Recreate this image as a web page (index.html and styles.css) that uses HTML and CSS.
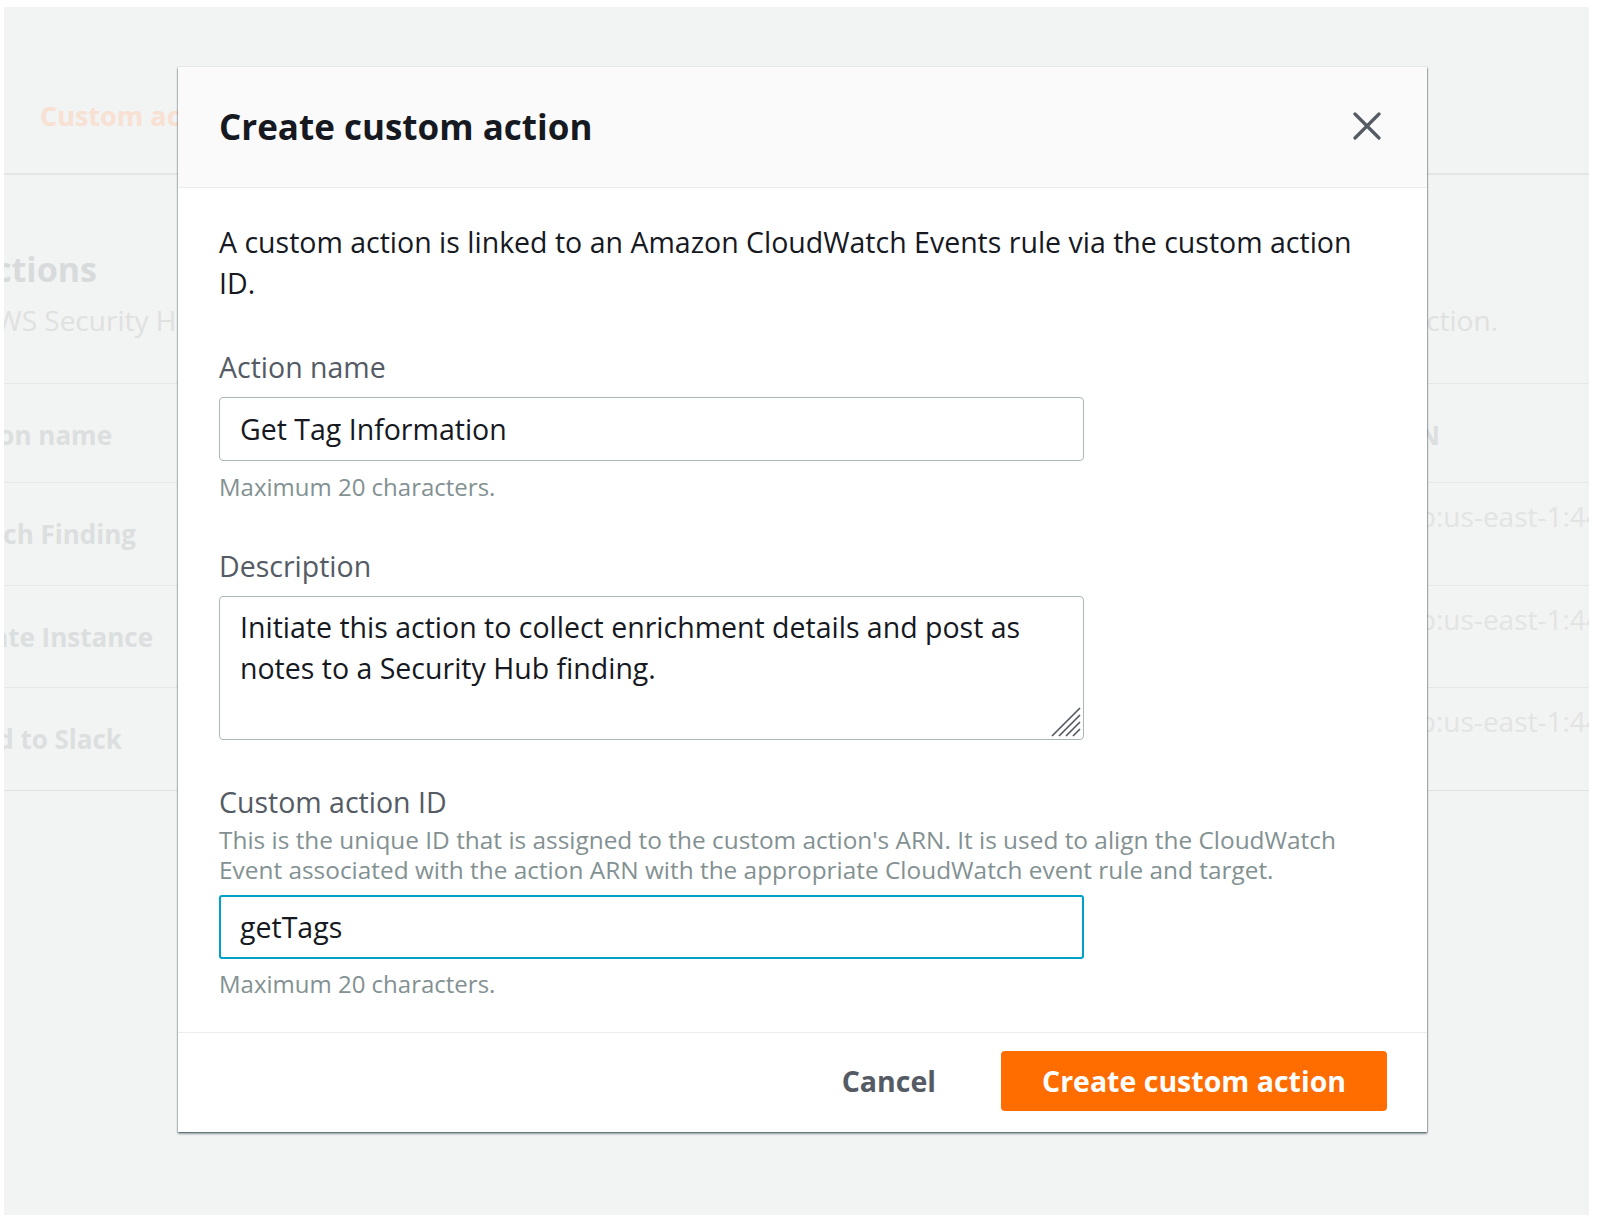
FILE: index.html
```html
<!DOCTYPE html>
<html lang="en">
<head>
<meta charset="utf-8">
<title>Create custom action</title>
<link rel="stylesheet" href="styles.css">
</head>
<body>
<div class="screen">
  <div class="page">
    <div class="tabs"><span class="tab">Custom actions</span></div>

    <div class="bg-row row-heading">
      <div class="bg-left"><div class="pre w-heading"><span class="bg-h">Custom actions</span></div></div>
    </div>

    <div class="bg-row row-desc">
      <div class="bg-left">
        <div class="pre w-aws"><span>Create custom actions to send findings in AWS</span></div><span>&nbsp;Security Hub to Amazon CloudWatch Events</span>
      </div>
      <div class="bg-gap"></div>
      <div class="bg-right"><div class="pre w-action"><span>findings to a custom action.</span></div></div>
    </div>

    <div class="table">
      <div class="bg-row thead">
        <div class="bg-left"><div class="pre w-name"><span>Action name</span></div></div>
        <div class="bg-gap"></div>
        <div class="bg-right"><div class="pre w-arn-h"><span>ARN</span></div></div>
      </div>
      <div class="bg-row trow">
        <div class="bg-left"><div class="pre w-r1"><span>Enrich Finding</span></div></div>
        <div class="bg-gap"></div>
        <div class="bg-right arn"><div class="pre w-arn"><span>arn:aws:securityhub</span></div><span>:us-east-1:444455556666:action/custom/getTags</span></div>
      </div>
      <div class="bg-row trow">
        <div class="bg-left"><div class="pre w-r2"><span>Terminate Instance</span></div></div>
        <div class="bg-gap"></div>
        <div class="bg-right arn"><div class="pre w-arn"><span>arn:aws:securityhub</span></div><span>:us-east-1:444455556666:action/custom/terminate</span></div>
      </div>
      <div class="bg-row trow">
        <div class="bg-left"><div class="pre w-r3"><span>Send to Slack</span></div></div>
        <div class="bg-gap"></div>
        <div class="bg-right arn"><div class="pre w-arn"><span>arn:aws:securityhub</span></div><span>:us-east-1:444455556666:action/custom/slack</span></div>
      </div>
    </div>
  </div>

  <div class="modal" role="dialog" aria-labelledby="modal-title">
    <div class="modal-head">
      <h2 id="modal-title" class="modal-title">Create custom action</h2>
      <button class="close" type="button" aria-label="Close">
        <svg width="28" height="28" viewBox="0 0 28 28" aria-hidden="true"><path d="M2 2 L26 26 M26 2 L2 26" stroke="#545b64" stroke-width="3.2" stroke-linecap="round" fill="none"/></svg>
      </button>
    </div>

    <div class="modal-body">
      <p class="intro">A custom action is linked to an Amazon CloudWatch Events rule via the custom action ID.</p>

      <div class="field">
        <label class="label" for="f-name">Action name</label>
        <input id="f-name" class="input" type="text" value="Get Tag Information">
        <div class="hint">Maximum 20 characters.</div>
      </div>

      <div class="field field-desc">
        <label class="label" for="f-desc">Description</label>
        <div class="textwrap">
          <textarea id="f-desc" class="textarea">Initiate this action to collect enrichment details and post as notes to a Security Hub finding.</textarea>
          <svg class="grip" width="34" height="34" viewBox="0 0 34 34" aria-hidden="true"><path d="M33 5 L5 33 M33 12 L12 33 M33 19 L19 33 M33 26 L26 33" stroke="#545b64" stroke-width="1.7" fill="none"/></svg>
        </div>
      </div>

      <div class="field field-id">
        <label class="label" for="f-id">Custom action ID</label>
        <div class="desc">This is the unique ID that is assigned to the custom action's ARN. It is used to align the CloudWatch Event associated with the action ARN with the appropriate CloudWatch event rule and target.</div>
        <input id="f-id" class="input focus" type="text" value="getTags">
        <div class="hint hint-id">Maximum 20 characters.</div>
      </div>
    </div>

    <div class="modal-foot">
      <button class="btn-link" type="button">Cancel</button>
      <button class="btn-primary" type="button">Create custom action</button>
    </div>
  </div>
</div>
</body>
</html>
```

FILE: styles.css
```css
* { box-sizing: border-box; }

html, body { margin: 0; }

body {
  background: #ffffff;
  padding: 7px 8px 9px 4px;
  font-family: "Open Sans", "Noto Sans", sans-serif;
}

.screen {
  position: relative;
  width: 1585px;
  height: 1208px;
  background: #f2f3f3;
  overflow: hidden;
}

/* ---------- faded page behind the dialog ---------- */
.page {
  display: flex;
  flex-direction: column;
  white-space: nowrap;
}

.tabs {
  height: 168px;
  border-bottom: 2px solid #e4e6e6;
  padding: 89px 0 0 36px;
}

.tab {
  font-size: 27px;
  font-weight: 700;
  line-height: 40px;
  color: #f8e0d2;
}

.bg-row {
  display: flex;
  align-items: center;
}

.bg-left {
  width: 174px;
  flex: none;
  display: flex;
}

.bg-gap { flex: 1; }

.bg-right {
  width: 205px;
  flex: none;
  display: flex;
}

.pre {
  flex: none;
  display: flex;
  justify-content: flex-end;
}

.row-heading { margin-top: 72px; }

.bg-h {
  font-size: 34px;
  font-weight: 700;
  line-height: 44px;
  color: #d8dbdb;
}

.w-heading { width: 93px; }

.row-desc {
  margin-top: 9px;
  font-size: 28px;
  line-height: 40px;
  color: #dfe1e1;
}

.w-aws { width: 33px; }
.w-action { width: 114px; }

.table {
  margin-top: 43px;
  border-top: 1px solid #e6e8e8;
  font-size: 26px;
  line-height: 36px;
}

.thead {
  height: 99px;
  border-bottom: 1px solid #e6e8e8;
  font-weight: 700;
  color: #dcdfdf;
  padding-top: 4px;
}

.trow {
  height: 102.7px;
  border-bottom: 1px solid #e6e8e8;
  font-weight: 700;
  color: #dcdfdf;
}

.trow:last-child { border-bottom-color: #e0e2e2; }

.arn {
  font-weight: 400;
  font-size: 28px;
  color: #e2e4e4;
  padding-bottom: 36px;
}

.w-name { width: 108px; }
.w-r1 { width: 132px; }
.w-r2 { width: 149px; }
.w-r3 { width: 118px; }
.w-arn-h { width: 56px; }
.w-arn { width: 52px; }

/* ---------- dialog ---------- */
.modal {
  position: absolute;
  left: 174px;
  top: 60px;
  width: 1249px;
  background: #ffffff;
  box-shadow: 0 2px 2px rgba(0, 28, 36, 0.38), 1px 1px 1px rgba(0, 28, 36, 0.2), -1px 1px 1px rgba(0, 28, 36, 0.12), 0 0 0 1px rgba(0, 28, 36, 0.05);
  color: #16191f;
}

.modal-head {
  height: 121px;
  background: #fafafa;
  border-bottom: 1px solid #eaeded;
  display: flex;
  align-items: center;
  justify-content: space-between;
  padding: 0 46px 0 41px;
}

.modal-title {
  margin: 0;
  font-size: 35px;
  font-weight: 700;
  line-height: 44px;
  color: #16191f;
}

.close {
  display: flex;
  background: none;
  border: 0;
  padding: 0;
  margin-top: -2px;
}

.modal-body {
  padding: 33.5px 41px 33px;
}

.intro {
  margin: 0;
  font-size: 28.5px;
  line-height: 41px;
  color: #16191f;
}

.field { margin-top: 43px; }
.field-desc { margin-top: 43.5px; }
.field-id { margin-top: 41.5px; }

.label {
  display: block;
  font-size: 28.5px;
  line-height: 41px;
  color: #545b64;
}

.input {
  display: block;
  margin: 9.5px 0 0;
  width: 865px;
  height: 64px;
  border: 1px solid #aab7b8;
  border-radius: 4px;
  padding: 0 20px;
  font-family: "Open Sans", "Noto Sans", sans-serif;
  font-size: 28.5px;
  color: #16191f;
  background: #ffffff;
  outline: none;
}

.input.focus {
  margin-top: 10px;
  border: 2px solid #00a1c9;
  border-radius: 3px;
  padding: 0 19px;
}

.hint {
  margin-top: 11px;
  font-size: 24px;
  line-height: 30px;
  color: #839192;
}

.hint-id { margin-top: 10px; }

.desc {
  margin-top: 2.5px;
  font-size: 24.4px;
  line-height: 30px;
  color: #839192;
}

.textwrap {
  position: relative;
  margin-top: 9.5px;
  width: 865px;
  height: 144px;
}

.textarea {
  display: block;
  width: 100%;
  height: 100%;
  margin: 0;
  border: 1px solid #aab7b8;
  border-radius: 4px;
  padding: 9.5px 20px;
  font-family: "Open Sans", "Noto Sans", sans-serif;
  font-size: 28.5px;
  line-height: 41px;
  color: #16191f;
  background: #ffffff;
  resize: none;
  outline: none;
  overflow: hidden;
}

.grip {
  position: absolute;
  right: 3px;
  bottom: 3px;
}

.modal-foot {
  border-top: 1px solid #eaeded;
  padding: 18px 40px 21px;
  display: flex;
  justify-content: flex-end;
  align-items: center;
  gap: 33px;
}

.btn-link {
  height: 60px;
  padding: 0 32px;
  background: none;
  border: 0;
  font-family: "Open Sans", "Noto Sans", sans-serif;
  font-size: 28.5px;
  font-weight: 700;
  color: #545b64;
}

.btn-primary {
  width: 386px;
  height: 60px;
  padding: 0;
  background: #ff6c00;
  border: 0;
  border-radius: 4px;
  font-family: "Open Sans", "Noto Sans", sans-serif;
  font-size: 28.5px;
  font-weight: 700;
  color: #ffffff;
}
```
